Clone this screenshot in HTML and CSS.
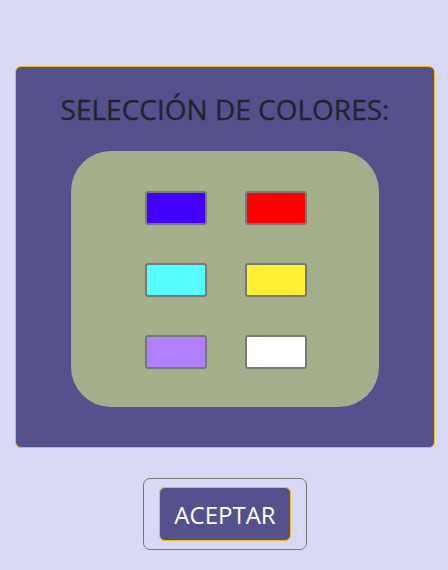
FILE: index.html
```html
<!DOCTYPE html>
<html lang="es">
<head>
<meta charset="utf-8">
<title>Selección de colores</title>
<link rel="stylesheet" href="styles.css">
</head>
<body>
<main class="page">
  <section class="card">
    <h1 class="title">SELECCIÓN DE COLORES:</h1>
    <div class="palette">
      <button class="swatch blue" aria-label="Azul"></button>
      <button class="swatch red" aria-label="Rojo"></button>
      <button class="swatch cyan" aria-label="Cian"></button>
      <button class="swatch yellow" aria-label="Amarillo"></button>
      <button class="swatch violet" aria-label="Violeta"></button>
      <button class="swatch white" aria-label="Blanco"></button>
    </div>
  </section>
  <div class="actions">
    <button class="accept">ACEPTAR</button>
  </div>
</main>
</body>
</html>
```
FILE: styles.css
```css
* { box-sizing: border-box; }
html, body {
  margin: 0;
  background: #d8d8f4;
}
body {
  font-family: "Open Sans", "Noto Sans", sans-serif;
}
.page {
  padding: 66px 13px 0 15px;
  display: flex;
  flex-direction: column;
  align-items: center;
}
.card {
  width: 420px;
  height: 382px;
  background: #54518d;
  border: 1px solid #f2b90f;
  border-radius: 6px;
  display: flex;
  flex-direction: column;
  align-items: center;
}
.title {
  margin: 22px 0 0 0;
  font-weight: 400;
  font-size: 28px;
  line-height: 40px;
  color: #24222e;
  -webkit-text-stroke: 0.3px #24222e;
}
.palette {
  margin-top: 22px;
  width: 308px;
  height: 256px;
  background: #a3af8a;
  border-radius: 40px;
  display: grid;
  grid-template-columns: 62px 62px;
  grid-auto-rows: 34px;
  column-gap: 38px;
  row-gap: 38px;
  justify-content: center;
  align-content: start;
  padding-top: 40px;
  padding-left: 2px;
}
.swatch {
  display: block;
  padding: 0;
  margin: 0;
  width: 62px;
  height: 34px;
  border: 2px solid #787878;
  border-radius: 3px;
}
.blue { background: #4400ff; }
.red { background: #ff0000; }
.cyan { background: #55ffff; }
.yellow { background: #ffee33; }
.violet { background: #b080ff; }
.white { background: #ffffff; }
.actions {
  margin-top: 30px;
  width: 164px;
  height: 72px;
  border: 1px solid #777;
  border-radius: 7px;
  display: flex;
  align-items: center;
  justify-content: center;
}
.accept {
  width: 132px;
  height: 54px;
  background: #54518d;
  border: 1px solid #f2b90f;
  border-radius: 6px;
  color: #ffffff;
  font-family: "Open Sans", "Noto Sans", sans-serif;
  font-size: 24px;
  padding: 0;
}
```
